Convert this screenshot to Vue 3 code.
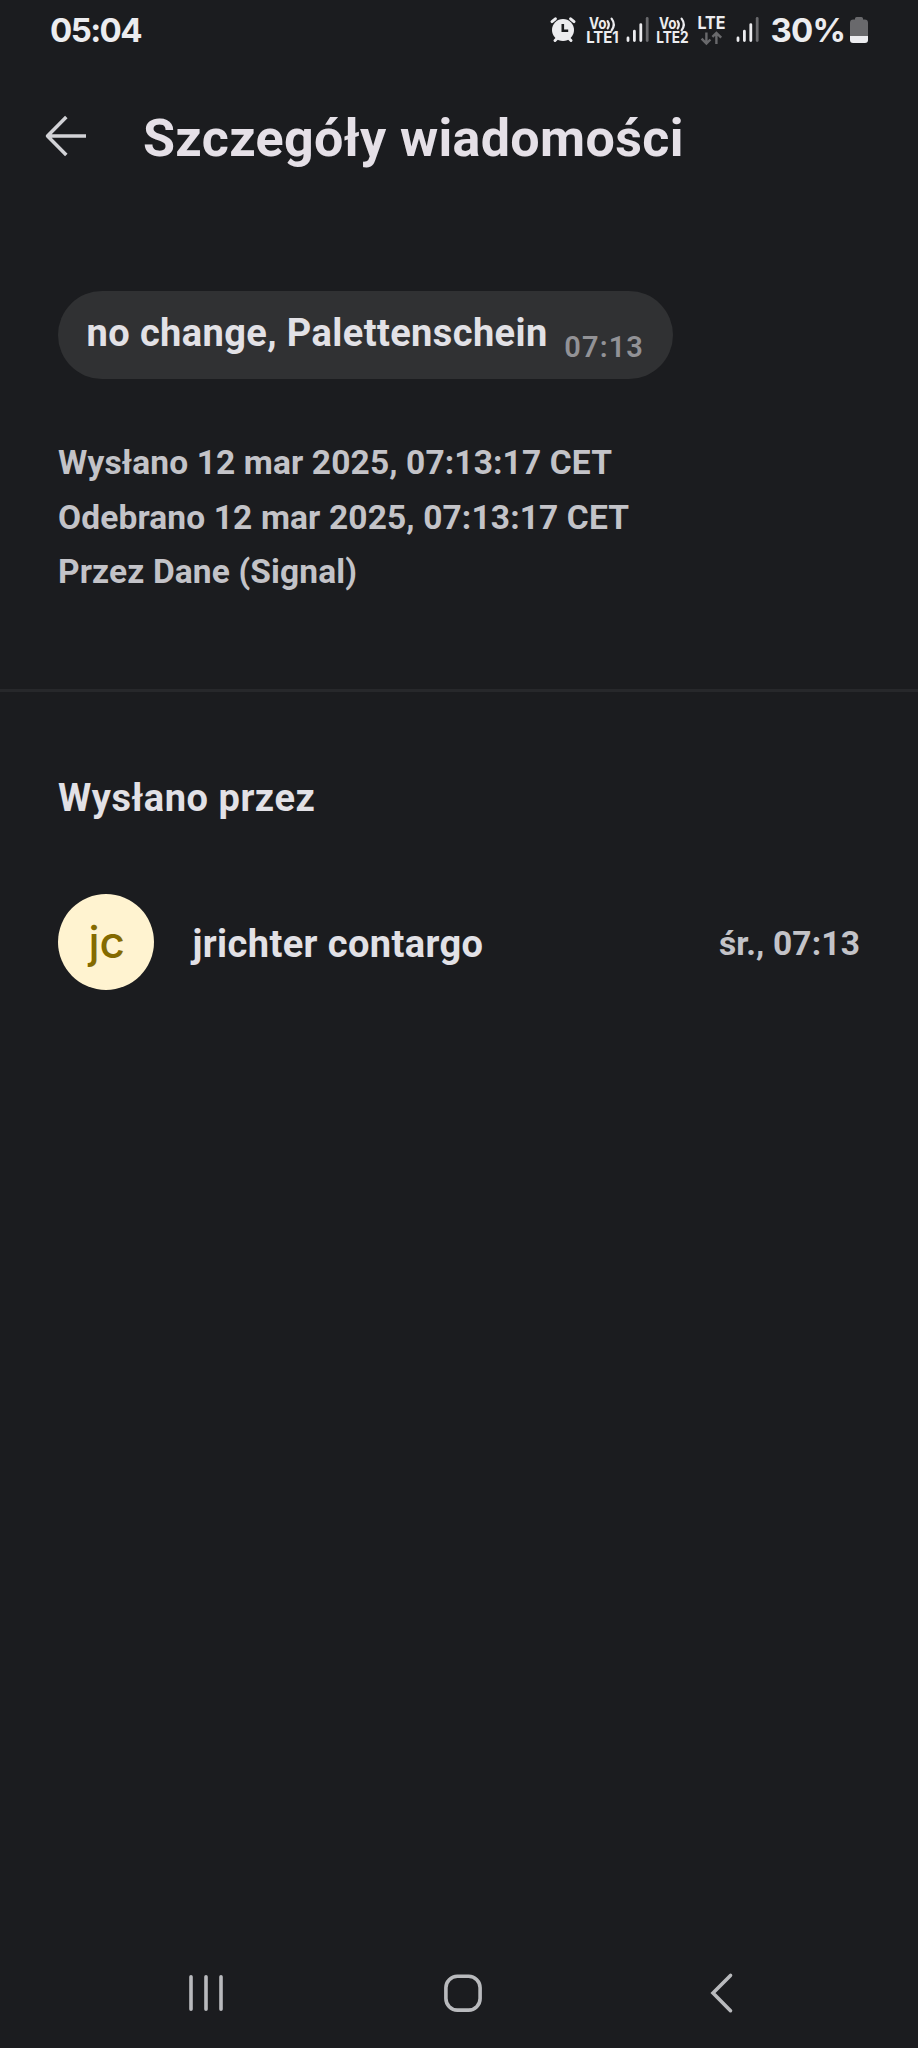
<script setup>
const details = [
  { text: 'Wysłano 12 mar 2025, 07:13:17 CET', cls: 'sent' },
  { text: 'Odebrano 12 mar 2025, 07:13:17 CET', cls: 'received' },
  { text: 'Przez Dane (Signal)', cls: 'via' },
]
const volte = ['LTE1', 'LTE2']
</script>

<template>
  <div class="screen">
    <div class="status">
      <span class="clock">05:04</span>
      <div class="indicators">
        <svg class="alarm" width="26" height="28" viewBox="0 0 26 28">
          <g fill="none" stroke="#ececef" stroke-width="3" stroke-linecap="round">
            <path d="M2 5.6 5.4 2.8M24 5.6 20.6 2.8M5 24.5 7 22.5M21 24.5 19 22.5" />
          </g>
          <circle cx="13" cy="14" r="11" fill="#ececef" />
          <path d="M12.8 8v6.8h5.4" fill="none" stroke="#1b1c1f" stroke-width="2.6" />
        </svg>
        <template v-for="(label, i) in volte" :key="label">
          <svg class="volte" :class="'volte' + i" width="34" height="30" viewBox="0 0 34 30">
            <text x="3" y="12.8" textLength="17.5" lengthAdjust="spacingAndGlyphs">Vo</text>
            <text x="0.2" y="27.2" textLength="32.5" lengthAdjust="spacingAndGlyphs">{{ label }}</text>
            <path d="M21.6 5.2Q24 8.600 21.6 12.4M25.6 2.6Q30 8.4 25.6 14.4" fill="none" stroke="#ececef" stroke-width="2.2" stroke-linecap="round" />
          </svg>
          <svg v-if="i === 1" class="lte" width="30" height="30" viewBox="0 0 30 30">
            <text x="0.5" y="13" textLength="28" lengthAdjust="spacingAndGlyphs">LTE</text>
            <path d="M9.4 16.500v11M4.600 22.7 9.4 27.5l4-4M19.4 27.900V16.900M15.4 20.9l4-4 4.800 4.800" fill="none" stroke="#69696c" stroke-width="2.4" />
          </svg>
          <svg class="signal" :class="'signal' + i" width="24" height="28" viewBox="0 0 24 28">
            <g stroke="#ececef" stroke-width="2.8" stroke-linecap="round">
              <path d="M2 22v2.600M8.4 15.200v9.400M14.8 8.600v16" />
              <path d="M21.2 2.400v22.200" stroke="#69696c" />
            </g>
          </svg>
        </template>
        <span class="percent">30%</span>
        <svg class="battery" width="18" height="28" viewBox="0 0 18 28">
          <path d="M5 3.4V2.6q0-1.6 1.6-1.6h4.8Q13 1 13 2.6v.8h1.6q3.4 0 3.4 3.4V20H0V6.800q0-3.400 3.400-3.400z" fill="#69696c" />
          <path d="M0 20h18v4q0 3-3 3H3q-3 0-3-3z" fill="#ececef" />
        </svg>
      </div>
    </div>

    <header class="bar">
      <svg class="back" width="44" height="44" viewBox="0 0 44 44">
        <path d="M22.300 3 3.500 22l18.800 19M3.500 22H42" fill="none" stroke="#d2d2d6" stroke-width="3.500" stroke-linejoin="round" />
      </svg>
      <h1 class="title">Szczegóły wiadomości</h1>
    </header>

    <main>
      <div class="bubble">
        <span class="message">no change, Palettenschein</span>
        <span class="stamp">07:13</span>
      </div>
      <div class="details">
        <div v-for="d in details" :key="d.cls"><span :class="d.cls">{{ d.text }}</span></div>
      </div>
      <div class="divider"></div>
      <h2 class="section">Wysłano przez</h2>
      <div class="contact">
        <div class="avatar">jc</div>
        <span class="name">jrichter contargo</span>
        <span class="when">śr., 07:13</span>
      </div>
    </main>

    <nav class="nav">
      <svg width="40" height="40" viewBox="0 0 40 40">
        <path d="M5 3.700v32.600M20 3.700v32.600M35 3.700v32.600" stroke="#b9babd" stroke-width="3.600" stroke-linecap="round" />
      </svg>
      <svg width="40" height="40" viewBox="0 0 40 40">
        <rect x="2.900" y="3.300" width="34.200" height="33.800" rx="11.500" fill="none" stroke="#b9babd" stroke-width="3.600" />
      </svg>
      <svg width="40" height="40" viewBox="0 0 40 40">
        <path d="M29.500 2.400 12 20l17.500 17.700" fill="none" stroke="#b9babd" stroke-width="3.600" stroke-linecap="round" />
      </svg>
    </nav>
  </div>
</template>

<style>
body {
  background: #1b1c1f;
}
</style>

<style scoped>
.screen {
  width: 918px;
  height: 2048px;
  display: flex;
  flex-direction: column;
  overflow: hidden;
  background: #1b1c1f;
  color: #e2e1e6;
  font-family: Roboto, "Noto Sans", sans-serif;
  font-weight: 700;
  white-space: nowrap;
}
svg {
  display: block;
  flex: none;
  overflow: visible;
}
.status {
  height: 60px;
  display: flex;
  justify-content: space-between;
  padding: 0 50px;
  font-family: Inter, sans-serif;
  color: #ececef;
}
.clock,
.percent {
  font-size: 33px;
  line-height: 60px;
}
.clock {
  letter-spacing: -1.6px;
}
.percent {
  width: 74px;
  margin-left: 11px;
  letter-spacing: -0.8px;
}
.indicators {
  display: flex;
  align-items: flex-start;
}
.indicators svg {
  margin-top: 16px;
}
.indicators .alarm {
  margin-right: 10px;
}
.volte text,
.lte text {
  font-family: Inter, sans-serif;
  font-weight: 700;
  font-size: 15.500px;
  fill: #ececef;
}
.lte text {
  font-size: 17.500px;
}
.volte0 {
  margin-right: 6px;
}
.signal0 {
  margin-right: 6px;
}
.volte1 {
  margin-right: 6.500px;
}
.lte {
  margin-right: 9px;
}
.battery {
  margin-left: 5.500px;
}
.bar {
  height: 156px;
  display: flex;
  align-items: center;
  padding-left: 44px;
}
.back {
  margin-bottom: 4px;
}
.title {
  margin: 1px 0 0 55px;
  font-size: 52px;
  line-height: 64px;
  letter-spacing: 0.350px;
  color: #e5e0e7;
}
main {
  padding: 0 58px;
}
.bubble {
  width: 615px;
  height: 88px;
  margin-top: 75px;
  border-radius: 44px;
  background: #303133;
  display: flex;
  justify-content: space-between;
  padding: 0 29px 0 28.500px;
  box-sizing: border-box;
}
.message {
  font-size: 38px;
  line-height: 84px;
  letter-spacing: 0.400px;
}
.stamp {
  font-size: 29px;
  line-height: 112px;
  letter-spacing: 1.100px;
  font-weight: 600;
  color: #929296;
}
.details {
  margin-top: 57px;
  font-size: 33.500px;
  line-height: 54.500px;
  letter-spacing: 0.130px;
  color: #c3c3c8;
}
.divider {
  height: 3px;
  margin: 89px -58px 0;
  background: #27282b;
}
.section {
  margin: 82px 0 0;
  font-size: 38px;
  line-height: 48px;
  letter-spacing: 0.550px;
}
.contact {
  height: 96px;
  margin-top: 72px;
  display: flex;
  align-items: center;
}
.avatar {
  width: 96px;
  height: 96px;
  box-sizing: border-box;
  padding-left: 1.500px;
  border-radius: 50%;
  background: #fff3d0;
  color: #846a00;
  font: 500 44px/97px Inter, sans-serif;
  text-align: center;
}
.name {
  margin: 4px auto 0 38.500px;
  font-size: 38px;
  letter-spacing: 0.400px;
}
.when {
  margin-top: 4px;
  font-size: 33.500px;
  letter-spacing: 0.150px;
  color: #c3c3c8;
}
.nav {
  margin-top: auto;
  height: 110px;
  display: flex;
  justify-content: space-between;
  align-items: center;
  padding: 0 177.500px 0 185.500px;
}
</style>
